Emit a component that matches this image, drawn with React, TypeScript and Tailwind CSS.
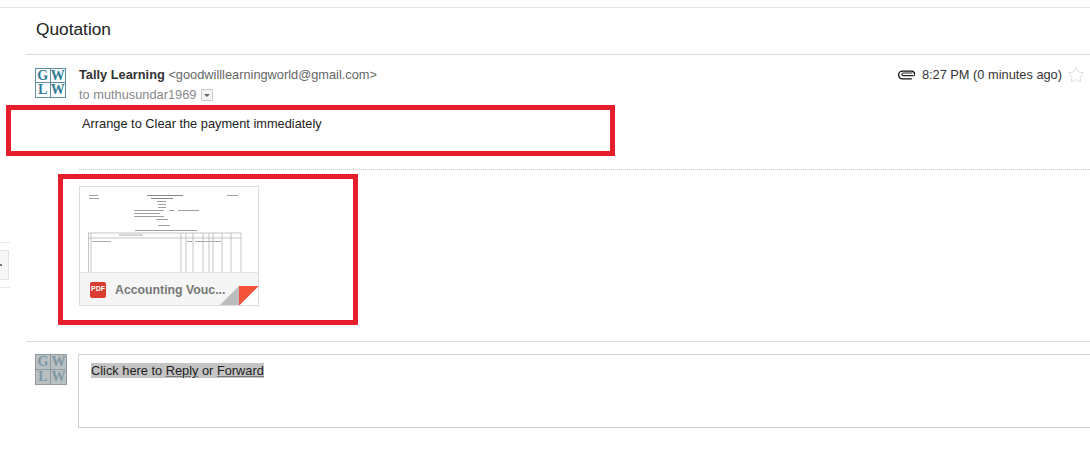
import { Star } from "lucide-react";

const font = "font-['Liberation_Sans',Arial,sans-serif]";

function Avatar({ faded = false }: { faded?: boolean }) {
  const cell = `flex items-center justify-center font-['Liberation_Serif',serif] font-bold text-[14px] leading-none ${
    faded ? "text-[#7f98a3]" : "text-[#2f7c96]"
  }`;
  const line = faded ? "border-[#8f9a9e]" : "border-[#5f8fa3]";
  return (
    <div
      className={`grid shrink-0 grid-cols-2 grid-rows-2 border ${line} ${
        faded ? "h-[31px] w-[32px] bg-[#b9c0c2]" : "h-[30px] w-[31px] bg-white"
      }`}
    >
      <div className={`${cell} border-r border-b ${line}`}>G</div>
      <div className={`${cell} border-b ${line}`}>W</div>
      <div className={`${cell} border-r ${line}`}>L</div>
      <div className={cell}>W</div>
    </div>
  );
}

function PaperClip() {
  return (
    <svg width="17" height="10" viewBox="0 0 17 10" fill="none" className="shrink-0">
      <path d="M15.6 5.6H5.2a1.3 1.3 0 0 1 0-2.6h9.3" stroke="#222" strokeWidth="1.1" />
      <path d="M13.8 8.8H4.4a3.8 3.8 0 0 1 0-7.6h9.4a3.2 3.2 0 0 1 2.6 4.6" stroke="#111" strokeWidth="1.3" />
    </svg>
  );
}

function DocThumb() {
  const cols = [101, 106, 113, 123, 129, 133, 142, 151];
  return (
    <svg width="178" height="85" viewBox="0 0 178 85" className="block opacity-70 blur-[0.4px]">
      <g fill="#777777">
        <rect x="9" y="8" width="9" height="1" />
        <rect x="9" y="11" width="10" height="1" />
        <rect x="67" y="8" width="36" height="1" fill="#555" />
        <rect x="71" y="11" width="22" height="1" fill="#555" />
        <rect x="77" y="14" width="9" height="1" />
        <rect x="78" y="17" width="8" height="1" />
        <rect x="78" y="20" width="8" height="1" />
        <rect x="54" y="23" width="30" height="1" />
        <rect x="89" y="23" width="5" height="1" />
        <rect x="98" y="23" width="21" height="1" />
        <rect x="54" y="26" width="26" height="1" />
        <rect x="54" y="29" width="30" height="1" />
        <rect x="76" y="32" width="12" height="1" />
        <rect x="147" y="8" width="11" height="1" />
        <rect x="78" y="38" width="12" height="1" />
        <rect x="55" y="43" width="62" height="1" />
      </g>
      <g stroke="#888888" strokeWidth="0.7" fill="none">
        <rect x="8.5" y="46" width="152.5" height="42" />
        <line x1="8.5" y1="51" x2="161" y2="51" />
        <line x1="11" y1="46" x2="11" y2="86" />
        {cols.map((x) => (
          <line key={x} x1={x} y1="46" x2={x} y2="86" />
        ))}
      </g>
      <g fill="#888888">
        <rect x="39" y="47.5" width="24" height="1" />
        <rect x="12" y="54" width="19" height="1" />
        <rect x="107" y="54" width="5" height="1" />
        <rect x="115" y="54" width="26" height="1" />
      </g>
    </svg>
  );
}

function AttachmentCard() {
  return (
    <div className="relative h-[120px] w-[180px] overflow-hidden border border-[#dddddd] bg-white">
      <DocThumb />
      <div className="flex h-[34px] items-center gap-[9px] border-t border-[#e4e4e4] bg-[#f5f5f5] pl-[10px]">
        <span className="flex h-[16px] w-[16px] items-center justify-center rounded-[2px] bg-[#d93c30] text-[7px] font-bold text-white">
          PDF
        </span>
        <span className="pt-[2px] text-[12.3px] font-bold text-[#777777]">Accounting Vouc...</span>
      </div>
      {/* folded corner */}
      <svg width="41" height="21" viewBox="0 0 41 21" className="absolute -right-px -bottom-px">
        <polygon points="1,21 21,1 21,21" fill="#bdbdbd" />
        <polygon points="21,1 41,1 21,21" fill="#f4523a" />
        <polygon points="21,21 41,1 41,21" fill="#ffffff" />
      </svg>
    </div>
  );
}

export default function App() {
  return (
    <div className={`${font} relative h-[467px] w-[1090px] overflow-hidden bg-white text-[12.8px] text-[#222222]`}>
      <div className="h-[8px] border-b border-[#e5e5e5]" />

      <div className="ml-[26px] flex h-[47px] items-center border-b border-[#dcdcdc] pb-[3px] pl-[10px]">
        <h1 className="text-[17.3px] font-normal text-[#222222]">Quotation</h1>
      </div>

      <div className="flex pt-[13px] pr-[5px] pl-[35px]">
        <Avatar />
        <div className="ml-[13px] min-w-0 flex-1">
          <div className="flex h-[14px] items-center justify-between">
            <div className="leading-[14px]">
              <span className="font-bold text-[#333333]">Tally Learning</span>{" "}
              <span className="text-[#666666]">&lt;goodwilllearningworld@gmail.com&gt;</span>
            </div>
            <div className="flex items-center gap-[7px] text-[#333333]">
              <PaperClip />
              <span className="mr-[-2px] leading-[14px]">8:27 PM (0 minutes ago)</span>
              <Star size={18} strokeWidth={1} className="text-[#d6d6d6]" />
            </div>
          </div>
          <div className="mt-[6px] flex items-center gap-[5px] leading-[14px] text-[#888888]">
            <span>to muthusundar1969</span>
            <span className="flex h-[12px] w-[12px] items-center justify-center rounded-[1px] border border-[#c8c8c8] bg-[#f5f5f5]">
              <span className="border-x-[3px] border-t-[3px] border-x-transparent border-t-[#666666]" />
            </span>
          </div>
          <p className="mt-[15px] ml-[3px] leading-[14px] text-[#222222]">Arrange to Clear the payment immediately</p>
        </div>
      </div>

      <div className="mt-[38px] ml-[79px] border-t border-dotted border-[#cccccc] pt-[16px]">
        <AttachmentCard />
      </div>

      <div className="mt-[35px] ml-[26px] flex border-t border-[#dcdcdc] pt-[12px] pl-[9px]">
        <Avatar faded />
        <div className="ml-[11px] h-[74px] flex-1 border border-r-0 border-[#cfcfcf] px-[12px] pt-[6px]">
          <span className="bg-[#c4c4c4] leading-[14px] text-[#222222]">
            Click here to <span className="underline decoration-[#777777]">Reply</span> or{" "}
            <span className="underline decoration-[#777777]">Forward</span>
          </span>
        </div>
      </div>

      {/* cropped sidebar button at the left edge */}
      <div className="absolute top-[242px] left-0 h-[46px] w-[10px] border-y border-[#e8e8e8]">
        <div className="mt-[7px] flex h-[30px] w-[9px] items-center border-y border-r border-[#e4e4e4] bg-[#f7f7f7]">
          <span className="h-[2px] w-[2px] bg-[#777777]" />
        </div>
      </div>

      {/* red annotation boxes drawn over the screenshot */}
      <div className="absolute top-[105px] left-[6px] h-[51px] w-[609px] border-[5px] border-[#e61e2b]" />
      <div className="absolute top-[174px] left-[58px] h-[151px] w-[300px] border-[5px] border-[#e61e2b]" />
    </div>
  );
}
